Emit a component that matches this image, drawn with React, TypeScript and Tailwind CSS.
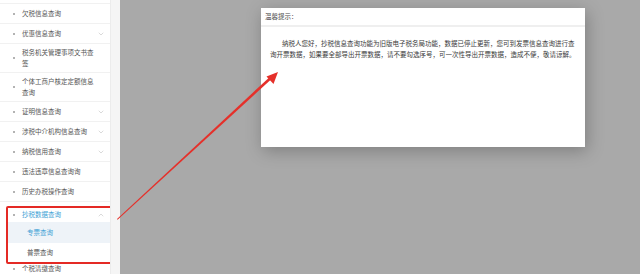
import { ChevronDown, ChevronUp } from "lucide-react"

type Item = { lines: string[]; arrow?: boolean }

const items: Item[] = [
  { lines: ["欠税信息查询"] },
  { lines: ["优惠信息查询"], arrow: true },
  { lines: ["税务机关管理事项文书查", "签"] },
  { lines: ["个体工商户核定定额信息", "查询"] },
  { lines: ["证明信息查询"], arrow: true },
  { lines: ["涉税中介机构信息查询"], arrow: true },
  { lines: ["纳税信用查询"], arrow: true },
  { lines: ["违法违章信息查询询"] },
  { lines: ["历史办税操作查询"] },
]

function Row({ item }: { item: Item }) {
  const tall = item.lines.length > 1
  return (
    <div
      className={`flex shrink-0 items-center border-b border-[#f1f1f1] pl-[13px] pr-[5px] ${
        tall ? "h-[29px]" : "h-[20px]"
      }`}
    >
      <span className="mr-[7px] h-[2px] w-[2px] shrink-0 self-center rounded-full bg-[#9a9a9a]" />
      <div className="flex-1 leading-[11px] text-[#555]">
        {item.lines.map((l) => (
          <div key={l}>{l}</div>
        ))}
      </div>
      {item.arrow && <ChevronDown className="h-[8px] w-[8px] text-[#b5b5b5]" strokeWidth={1.5} />}
    </div>
  )
}

export default function App() {
  return (
    <div
      className="relative flex h-[274px] w-[640px] overflow-hidden bg-[#a9a9a9] text-[6.5px]"
      style={{ fontFamily: '"Noto Sans CJK SC", "Noto Sans", sans-serif' }}
    >
      {/* 左侧菜单 */}
      <div className="flex w-[120px] shrink-0 bg-white">
        <div className="flex w-[110px] flex-col pt-[3px]">
          <div className="h-0 border-b border-[#f1f1f1]" />
          {items.map((it) => (
            <Row key={it.lines[0]} item={it} />
          ))}

          {/* 抄税数据查询 - 选中分组 */}
          <div className="ml-[6px] mr-[-3px] mt-[4px] flex flex-col rounded-[2px] border-2 border-[#e42a25]">
            <div className="flex h-[14px] items-center pl-[5px] pr-[6px]">
              <span className="mr-[7px] h-[2px] w-[2px] rounded-full bg-[#9a9a9a]" />
              <span className="flex-1 text-[#3d9fd5]">抄税数据查询</span>
              <ChevronUp className="h-[8px] w-[8px] text-[#b5b5b5]" strokeWidth={1.5} />
            </div>
            <div className="flex h-[21px] items-center bg-[#eef3f8] pl-[19px] text-[#3d9fd5]">专票查询</div>
            <div className="flex h-[19px] items-center pl-[19px] text-[#555]">普票查询</div>
          </div>

          <div className="flex h-[20px] items-center pl-[13px]">
            <span className="mr-[7px] h-[2px] w-[2px] rounded-full bg-[#9a9a9a]" />
            <span className="text-[#555]">个税清缴查询</span>
          </div>
        </div>
        <div className="w-[10px] border-l border-[#ececec] bg-[#f5f5f5]" />
      </div>

      {/* 右侧遮罩 + 弹窗 */}
      <div className="flex-1 pl-[141px] pt-[8px]">
        <div className="h-[139px] w-[324px] bg-white shadow-[2px_4px_16px_rgba(0,0,0,0.25)]">
          <div className="flex h-[19px] items-center border-b-2 border-[#efefef] px-[4px] pt-[1px] text-[#4a4a4a]">
            温馨提示：
          </div>
          <div className="px-[9px] pt-[11px] leading-[11px] text-[#3a3a3a]">
            <div className="whitespace-nowrap pl-[12px]">
              纳税人您好，抄税信息查询功能为旧版电子税务局功能，数据已停止更新，您可到发票信息查询进行查
            </div>
            <div className="whitespace-nowrap">
              询开票数据，如果要全部导出开票数据，请不要勾选序号，可一次性导出开票数据，造成不便，敬请谅解。
            </div>
          </div>
        </div>
      </div>

      {/* 红色箭头标注 */}
      <svg className="pointer-events-none absolute left-0 top-0" width="640" height="274" viewBox="0 0 640 274">
        <polygon points="117,219 117.6,219.8 271,79.5 269.2,77.4" fill="#e5302a" />
        <polygon points="278,72 266.5,76.5 273.5,84" fill="#e5302a" />
      </svg>
    </div>
  )
}
